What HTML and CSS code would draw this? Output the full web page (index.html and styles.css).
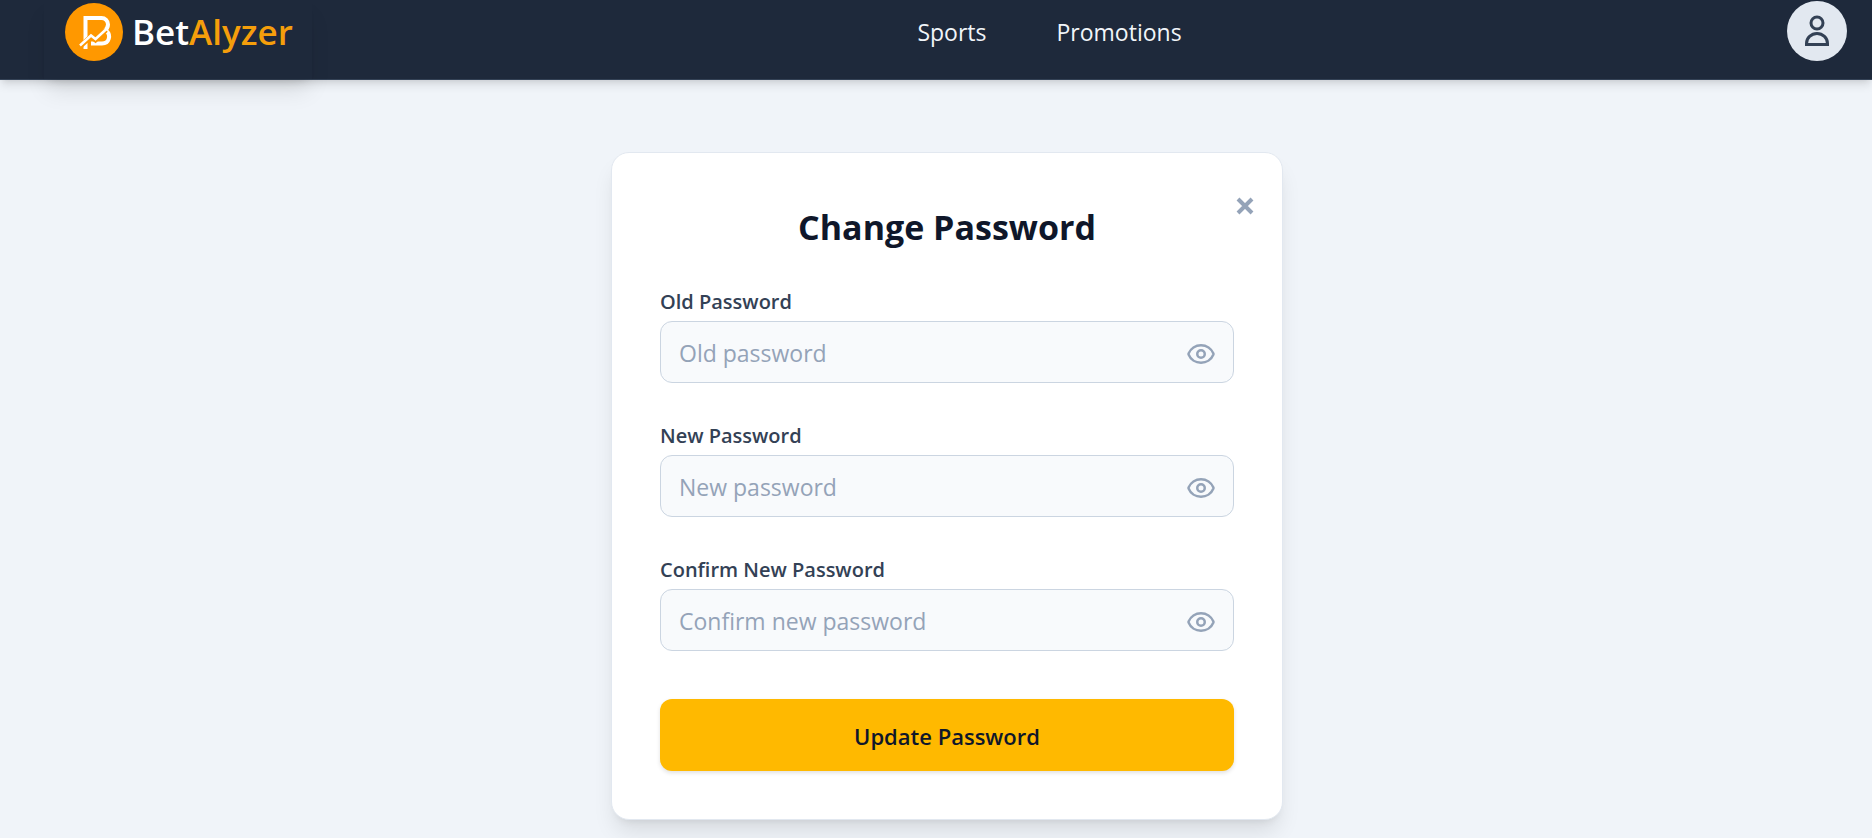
FILE: index.html
```html
<!DOCTYPE html>
<html lang="en">
<head>
  <meta charset="utf-8">
  <meta name="viewport" content="width=device-width, initial-scale=1">
  <title>BetAlyzer - Change Password</title>
  <link rel="stylesheet" href="styles.css">
</head>
<body>
  <header class="header">
    <a class="brand" href="#">
      <svg class="brand-mark" viewBox="0 0 60 60" aria-hidden="true">
        <circle cx="30" cy="30" r="29" fill="#ff9800"/>
        <g fill="none" stroke="#fff" stroke-width="4">
          <path d="M21.500 38V16H37.500a6.500 6.500 0 0 1 6.500 6.500c0 3-1.500 5-4 7"/>
          <path d="M42.500 29c4.500 4 3 12.500-4.500 12.500H27"/>
          <path d="M21.500 41v6"/>
          <path d="M16 44.500 27 34.500l4.500 3.500L42 28" stroke="#ff9800" stroke-width="5"/>
          <path d="M16 43.500 27 33.500l4.500 3.500L43 26.500" stroke-width="2.500"/>
        </g>
      </svg>
      <span class="brand-name">Bet<span class="brand-accent">Alyzer</span></span>
    </a>
    <nav class="nav">
      <a class="nav-link" href="#">Sports</a>
      <a class="nav-link" href="#">Promotions</a>
    </nav>
    <button class="avatar" type="button" aria-label="Account">
      <svg class="avatar-icon" viewBox="0 0 60 60" fill="none" stroke="#334155" stroke-width="3" aria-hidden="true">
        <circle cx="30" cy="22" r="6"/>
        <path d="M19.5 43.500v-1a10.500 10 0 0 1 21 0v1z"/>
      </svg>
    </button>
  </header>

  <main class="main">
    <form class="card">
      <button class="close" type="button" aria-label="Close">
        <svg class="close-icon" viewBox="0 0 18 18" fill="none" stroke="currentColor" stroke-width="4" aria-hidden="true">
          <path d="M2 2l14 14M16 2L2 16"/>
        </svg>
      </button>
      <h1 class="title">Change Password</h1>

      <div class="field">
        <label class="label" for="old">Old Password</label>
        <div class="control">
          <input class="input" id="old" type="password" placeholder="Old password">
          <button class="toggle" type="button" aria-label="Show old password">
            <svg class="eye" viewBox="0 0 24 24" aria-hidden="true"><path d="M2.062 12.348a1 1 0 0 1 0-.696 10.75 10.75 0 0 1 19.876 0 1 1 0 0 1 0 .696 10.75 10.75 0 0 1-19.876 0"/><circle cx="12" cy="12" r="3"/></svg>
          </button>
        </div>
      </div>

      <div class="field">
        <label class="label" for="new">New Password</label>
        <div class="control">
          <input class="input" id="new" type="password" placeholder="New password">
          <button class="toggle" type="button" aria-label="Show new password">
            <svg class="eye" viewBox="0 0 24 24" aria-hidden="true"><path d="M2.062 12.348a1 1 0 0 1 0-.696 10.75 10.75 0 0 1 19.876 0 1 1 0 0 1 0 .696 10.75 10.75 0 0 1-19.876 0"/><circle cx="12" cy="12" r="3"/></svg>
          </button>
        </div>
      </div>

      <div class="field">
        <label class="label" for="confirm">Confirm New Password</label>
        <div class="control">
          <input class="input" id="confirm" type="password" placeholder="Confirm new password">
          <button class="toggle" type="button" aria-label="Show confirmed password">
            <svg class="eye" viewBox="0 0 24 24" aria-hidden="true"><path d="M2.062 12.348a1 1 0 0 1 0-.696 10.75 10.75 0 0 1 19.876 0 1 1 0 0 1 0 .696 10.75 10.75 0 0 1-19.876 0"/><circle cx="12" cy="12" r="3"/></svg>
          </button>
        </div>
      </div>

      <button class="submit" type="submit">Update Password</button>
    </form>
  </main>
</body>
</html>
```
FILE: styles.css
```css
*,
*::before,
*::after {
  box-sizing: border-box;
}

body {
  margin: 0;
  min-height: 100vh;
  background: #f0f4f9;
  color: #0f172a;
  font-family: "Segoe UI", "Open Sans", "Noto Sans", sans-serif;
}

button,
input {
  font: inherit;
}

button {
  padding: 0;
  border: 0;
  background: none;
  cursor: pointer;
}

svg {
  display: block;
}

.header {
  display: flex;
  align-items: flex-start;
  justify-content: space-between;
  height: 80px;
  padding: 0 25px 0 44px;
  background: #1e293b;
  border-bottom: 1px solid #334155;
  box-shadow: 0 6px 9px -1px rgba(0, 0, 0, 0.1), 0 3px 6px -3px rgba(0, 0, 0, 0.1);
}

.brand {
  display: flex;
  align-items: center;
  gap: 8px;
  width: 268px;
  height: 79px;
  padding: 0 20px 15px;
  color: #fff;
  text-decoration: none;
  box-shadow: 0 15px 22px -4px rgba(0, 0, 0, 0.1), 0 6px 9px -6px rgba(0, 0, 0, 0.1);
}

.brand-mark {
  flex: none;
  width: 60px;
  height: 60px;
}

.brand-name {
  font-size: 35px;
  font-weight: 600;
  line-height: 60px;
}

.brand-accent {
  color: #f59e0b;
}

.nav {
  display: flex;
  gap: 70px;
}

.nav-link {
  color: #f1f5f9;
  font-size: 23px;
  line-height: 64px;
  text-decoration: none;
}

.avatar {
  width: 60px;
  height: 60px;
  margin-top: 1px;
  border-radius: 50%;
  background: #e2e8f0;
}

.main {
  display: flex;
  justify-content: center;
  padding: 72px 0 18px 22px;
}

.card {
  position: relative;
  width: 100%;
  max-width: 672px;
  padding: 48px;
  background: #fff;
  border: 1px solid #e2e8f0;
  border-radius: 18px;
  box-shadow: 0 15px 22px -4px rgba(0, 0, 0, 0.1), 0 6px 9px -6px rgba(0, 0, 0, 0.1);
}

.close {
  position: absolute;
  top: 40px;
  right: 24px;
  padding: 4px;
  color: #94a3b8;
}

.close-icon {
  width: 18px;
  height: 18px;
}

.title {
  margin: 0 0 34px;
  font-size: 34px;
  font-weight: 700;
  line-height: 52px;
  text-align: center;
}

.field {
  margin-bottom: 38px;
}

.label {
  display: block;
  margin-bottom: 4px;
  color: #334155;
  font-size: 20px;
  font-weight: 600;
  line-height: 30px;
}

.control {
  position: relative;
}

.input {
  display: block;
  width: 100%;
  height: 62px;
  padding: 2px 64px 0 18px;
  background: #f8fafc;
  border: 1px solid #cbd5e1;
  border-radius: 12px;
  color: #0f172a;
  font-size: 23px;
}

.input::placeholder {
  color: #94a3b8;
  opacity: 1;
}

.toggle {
  position: absolute;
  top: 18px;
  right: 18px;
  color: #94a3b8;
}

.eye {
  width: 30px;
  height: 30px;
  fill: none;
  stroke: currentColor;
  stroke-width: 2;
  stroke-linecap: round;
  stroke-linejoin: round;
}

.submit {
  display: block;
  width: 100%;
  height: 72px;
  margin-top: 48px;
  padding-top: 2px;
  background: #ffb900;
  border-radius: 12px;
  color: #0f172a;
  font-size: 22px;
  font-weight: 600;
  box-shadow: 0 2px 4px rgba(0, 0, 0, 0.12);
}
```
